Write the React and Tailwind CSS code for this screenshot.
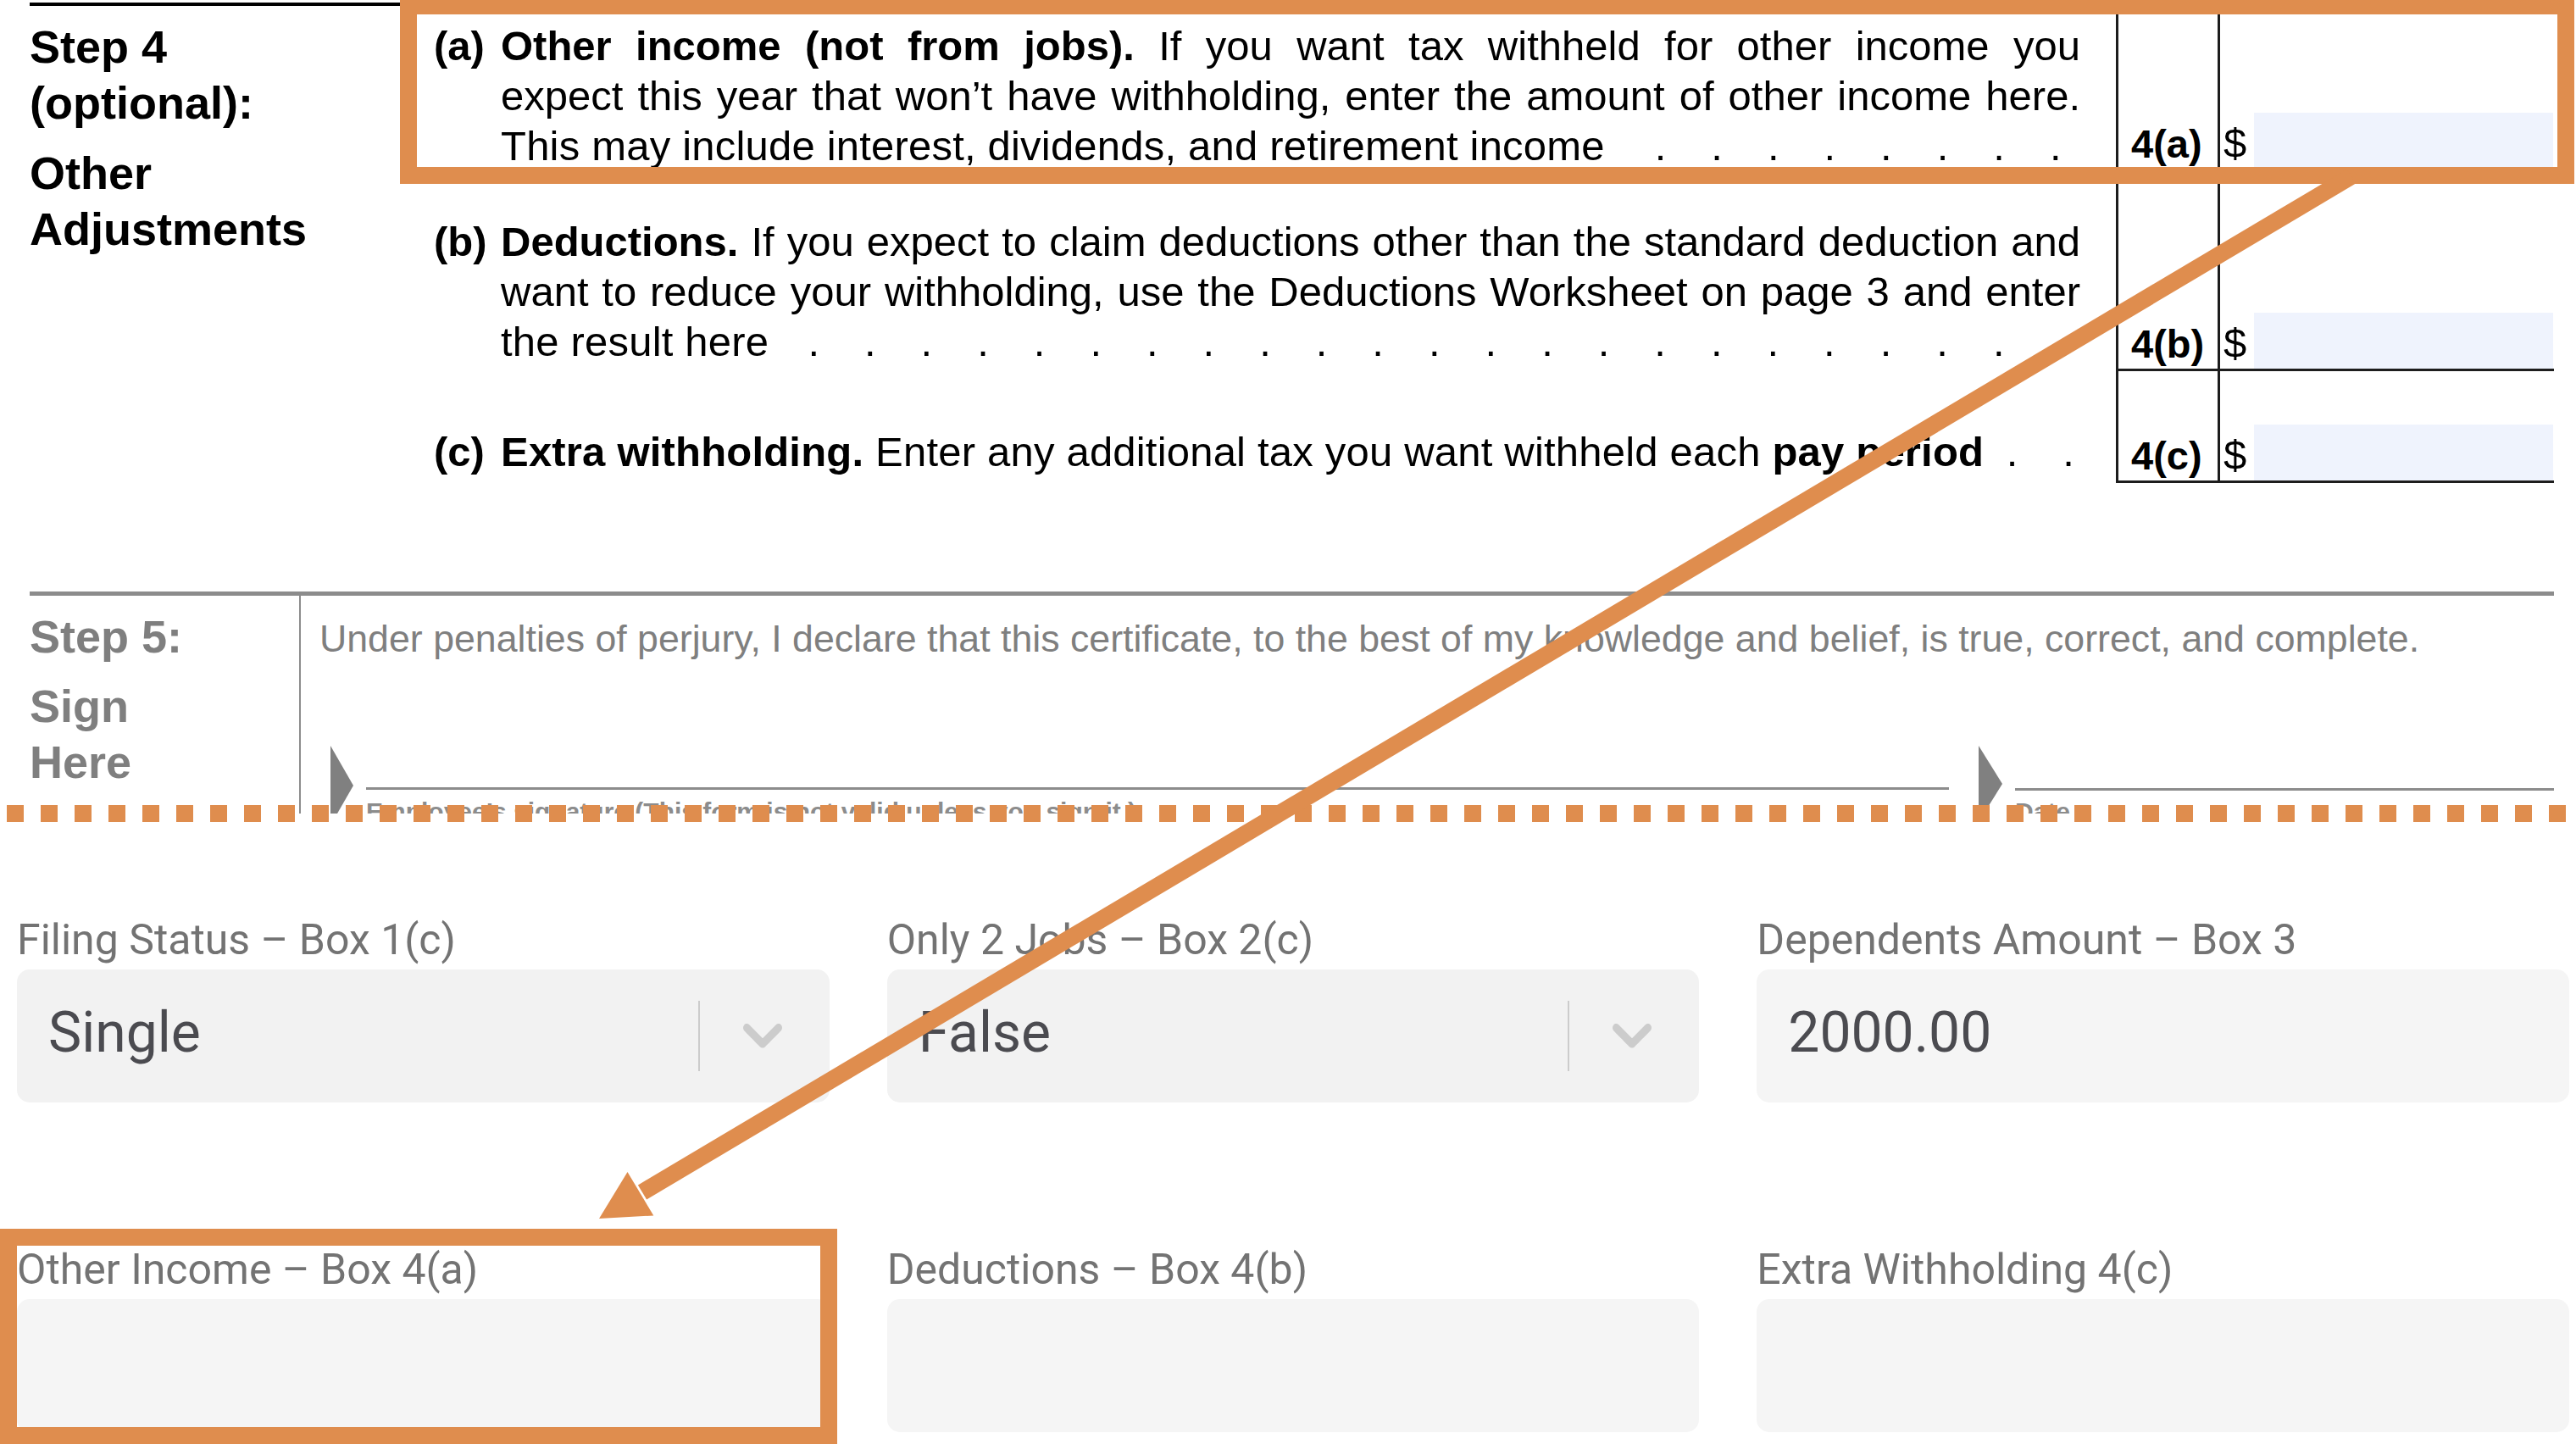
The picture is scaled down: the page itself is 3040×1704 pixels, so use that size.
import React from "react";

// Step 4 lines of the W-4 excerpt. Every non-final line is justified on its own.
const step4Rows = [
  {
    key: "a",
    letter: "(a)",
    label: "4(a)",
    rowClass: "h-[195px]",
    textClass: "pt-[18px]",
    lines: [
      <>
        <b>Other income (not from jobs).</b> If you want tax withheld for other income you
      </>,
      <>expect this year that won’t have withholding, enter the amount of other income here.</>,
    ],
    last: <>This may include interest, dividends, and retirement income</>,
    dots: 8,
    dotsClass: "mr-[-4px]",
  },
  {
    key: "b",
    letter: "(b)",
    label: "4(b)",
    rowClass: "h-[236px]",
    textClass: "pt-[54px]",
    lines: [
      <>
        <b>Deductions.</b> If you expect to claim deductions other than the standard deduction and
      </>,
      <>want to reduce your withholding, use the Deductions Worksheet on page 3 and enter</>,
    ],
    last: <>the result here</>,
    dots: 22,
    dotsClass: "mr-[63px]",
  },
  {
    key: "c",
    letter: "(c)",
    label: "4(c)",
    rowClass: "h-[132px]",
    textClass: "pt-[66px]",
    lines: [],
    last: (
      <>
        <b>Extra withholding.</b> Enter any additional tax you want withheld each <b>pay period</b>
      </>
    ),
    dots: 2,
    dotsClass: "mr-[-4px]",
  },
];

const Leader = ({ count }) =>
  Array.from({ length: count }).map((_, i) => (
    <span key={i} className="w-[66.6px] shrink-0 text-center">
      .
    </span>
  ));

const Step4Row = ({ row }) => (
  <div className={`flex ${row.rowClass}`}>
    <div className={`flex w-[1985px] text-[49px] leading-[59px] ${row.textClass}`}>
      <div className="w-[79px] font-bold">{row.letter}</div>
      <div className="w-[1864px]">
        {row.lines.map((line, i) => (
          <div key={i} className="text-justify [text-align-last:justify]">
            {line}
          </div>
        ))}
        <div className="flex">
          <span className="whitespace-nowrap tracking-[0.2px]">{row.last}</span>
          <span className={`flex flex-1 justify-end ${row.dotsClass}`}>
            <Leader count={row.dots} />
          </span>
        </div>
      </div>
    </div>
    <div className="flex w-[120px] items-end border-b-[3px] border-l-[3px] border-[#1d1d1d] pl-[15px] text-[47px] font-bold leading-[59px]">
      {row.label}
    </div>
    <div className="flex w-[397px] items-end border-b-[3px] border-l-[3px] border-[#1d1d1d]">
      <span className="ml-[4px] text-[49px] leading-[59px]">$</span>
      <div className="ml-[9px] mr-[1px] h-[66px] flex-1 bg-[#eff3fd]" />
    </div>
  </div>
);

const Pointer = ({ width, height }) => (
  <svg className="shrink-0" width={width} height={height} viewBox={`0 0 ${width} ${height}`}>
    <path d={`M0 0 L${width} ${height / 2} L0 ${height} Z`} fill="#808080" />
  </svg>
);

const FormExcerpt = () => (
  <div className="h-[960px] overflow-hidden text-black [font-family:'Liberation_Sans',Arial,sans-serif]">
    <div className="ml-[35px] mt-[3px] h-[4px] w-[2979px] bg-black" />

    {/* Step 4 */}
    <div className="flex pl-[35px]">
      <div className="w-[477px] pt-[15px] text-[54px] font-bold leading-[66px]">
        <div>Step 4</div>
        <div>(optional):</div>
        <div className="mt-[17px]">Other</div>
        <div>Adjustments</div>
      </div>
      <div className="flex flex-col">
        {step4Rows.map((row) => (
          <Step4Row key={row.key} row={row} />
        ))}
      </div>
    </div>

    {/* Step 5 */}
    <div className="ml-[35px] mt-[128px] flex w-[2979px] border-t-[5px] border-[#8c8c8c] text-[#7f7f7f]">
      <div className="w-[318px] pt-[15px] text-[54px] font-bold leading-[66px]">
        <div>Step 5:</div>
        <div className="mt-[16px]">Sign</div>
        <div>Here</div>
      </div>
      <div className="h-[300px] flex-1 border-l-[2px] border-[#8c8c8c] pl-[22px] pt-[25px]">
        <div className="text-[44.7px] leading-[52px]">
          Under penalties of perjury, I declare that this certificate, to the best of my knowledge and
          belief, is true, correct, and complete.
        </div>
        <div className="mt-[100px] flex items-start">
          <div className="ml-[13px]">
            <Pointer width={27} height={94} />
          </div>
          <div className="ml-[15px] w-[1868px]">
            <div className="mt-[49px] h-[3px] bg-[#8c8c8c]" />
            <div className="mt-[11px] text-[30px] font-bold leading-[30px] text-[#8c8c8c]">
              Employee’s signature (This form is not valid unless you sign it.)
            </div>
          </div>
          <div className="ml-[35px]">
            <Pointer width={28} height={90} />
          </div>
          <div className="ml-[15px] w-[636px]">
            <div className="mt-[50px] h-[3px] bg-[#8c8c8c]" />
            <div className="mt-[10px] text-[30px] font-bold leading-[30px] text-[#8c8c8c]">Date</div>
          </div>
        </div>
      </div>
    </div>
  </div>
);

const Chevron = () => (
  <svg
    className="ml-[51px] mr-[56px] shrink-0"
    width="46"
    height="29"
    viewBox="4.2 7.2 11.6 6.9"
    preserveAspectRatio="none"
    fill="#cccccc"
  >
    <path d="M4.516 7.548c0.436-0.446 1.043-0.481 1.576 0l3.908 3.747 3.908-3.747c0.533-0.481 1.141-0.446 1.574 0 0.436 0.445 0.408 1.197 0 1.615-0.406 0.418-4.695 4.502-4.695 4.502-0.217 0.223-0.502 0.335-0.787 0.335s-0.57-0.112-0.789-0.335c0 0-4.287-4.084-4.695-4.502s-0.436-1.17 0-1.615z" />
  </svg>
);

const Field = ({ label, children }) => (
  <div>
    <div className="mb-[10px] whitespace-nowrap text-[50px] leading-[50px] text-[#737373]">{label}</div>
    {children}
  </div>
);

const SelectBox = ({ value }) => (
  <div className="flex h-[157px] items-center rounded-[15px] bg-[#f2f2f2]">
    <span className="flex-1 pb-[8px] pl-[37px] text-[66px] leading-none text-[#4b4b50]">{value}</span>
    <span className="h-[83px] w-[2px] shrink-0 bg-[#cccccc]" />
    <Chevron />
  </div>
);

const TextBox = ({ value }) => (
  <div className="flex h-[157px] items-center rounded-[15px] bg-[#f5f5f5] pl-[37px]">
    <span className="pb-[8px] text-[66px] leading-none text-[#4b4b50]">{value}</span>
  </div>
);

const WebForm = () => (
  <div className="mt-[124px] grid grid-cols-3 gap-x-[68px] gap-y-[172px] pl-[20px] pr-[8px] [font-family:Roboto,'Liberation_Sans',sans-serif]">
    <Field label="Filing Status – Box 1(c)">
      <SelectBox value="Single" />
    </Field>
    <Field label="Only 2 Jobs – Box 2(c)">
      <SelectBox value="False" />
    </Field>
    <Field label="Dependents Amount – Box 3">
      <TextBox value="2000.00" />
    </Field>
    <Field label="Other Income – Box 4(a)">
      <TextBox value="" />
    </Field>
    <Field label="Deductions – Box 4(b)">
      <TextBox value="" />
    </Field>
    <Field label="Extra Withholding 4(c)">
      <TextBox value="" />
    </Field>
  </div>
);

// Orange highlight boxes, the tear line and the arrow linking 4(a) to its field
const Callouts = () => (
  <>
    <div className="pointer-events-none absolute left-[472px] top-[-3px] h-[220px] w-[2566px] border-[20px] border-[#df8d4e]" />
    <div className="pointer-events-none absolute left-0 top-[1450px] h-[254px] w-[988px] border-[20px] border-[#df8d4e]" />
    <div className="pointer-events-none absolute left-[8px] top-[950px] h-[20px] w-[3020px] bg-[repeating-linear-gradient(90deg,#df8d4e_0_20px,transparent_20px_40px)]" />
    <svg className="pointer-events-none absolute left-0 top-0" width="3040" height="1704">
      <line x1="2775" y1="208" x2="758" y2="1407" stroke="#df8d4e" strokeWidth="20" />
      <polygon points="707,1438 740.5,1383 771.3,1434.4" fill="#df8d4e" />
    </svg>
  </>
);

export default function App() {
  return (
    <div className="relative h-[1704px] w-[3040px] overflow-hidden bg-white">
      <FormExcerpt />
      <WebForm />
      <Callouts />
    </div>
  );
}
